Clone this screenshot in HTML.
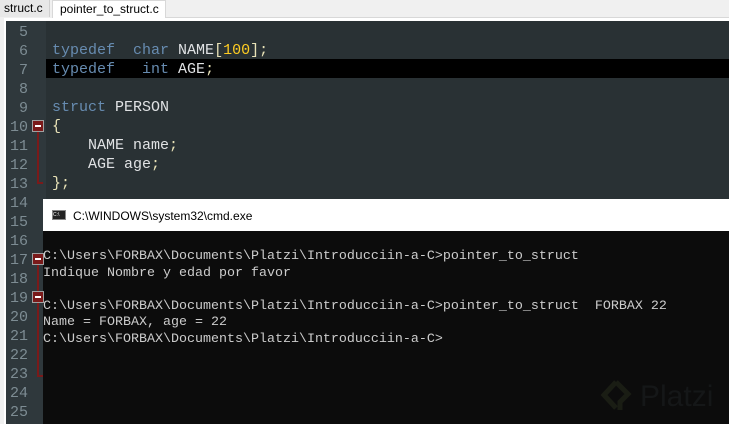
<!DOCTYPE html><html><head><style>
body{margin:0;width:729px;height:424px;overflow:hidden;background:#f0f0f0;position:relative;font-family:"Liberation Sans",sans-serif}
.a{position:absolute}
.mono{font-family:"Liberation Mono",monospace}
.ln{position:absolute;left:6px;width:22px;text-align:right;color:#7d8c93;font-size:15px;font-family:"Liberation Mono",monospace;line-height:19px}
.code{position:absolute;left:52px;font-size:15px;line-height:19px;color:#e0e2e4;white-space:pre}
.k{color:#678cb1}.n{color:#ffcd22}.p{color:#e8e2b7}
.fb{position:absolute;left:32px;width:10px;height:10px;border:1px solid #a0a0a0;background:#7a1a1a}
.fb:after{content:"";position:absolute;left:2px;top:4px;width:6px;height:2px;background:#fff}
.cmd{position:absolute;left:43px;font-size:13.33px;line-height:16.6px;color:#cccccc;white-space:pre;font-family:"Liberation Mono",monospace}
</style></head><body>
<div class="a" style="left:0;top:0;width:50px;height:17px;background:#e8e8e8;border-right:1px solid #d0d0d0;font-size:12px;line-height:17px;padding-left:4px;box-sizing:border-box">struct.c</div>
<div class="a" style="left:52px;top:0;width:114px;height:19px;background:#fff;border:1px solid #d8d8d8;border-bottom:none;font-size:12px;line-height:17px;padding-left:7px;box-sizing:border-box">pointer_to_struct.c</div>
<div class="a" style="left:166px;top:17px;width:563px;height:1px;background:#d8d8d8"></div>
<div class="a" style="left:4px;top:18px;width:725px;height:406px;background:#fff"></div>
<div class="a" style="left:6px;top:21px;width:40px;height:403px;background:#2f383c"></div>
<div class="a" style="left:46px;top:21px;width:683px;height:403px;background:#293134"></div>
<div class="a" style="left:46px;top:59px;width:683px;height:19px;background:#000"></div>
<div class="ln" style="top:23px">5<br>6<br>7<br>8<br>9<br>10<br>11<br>12<br>13<br>14<br>15<br>16<br>17<br>18<br>19<br>20<br>21<br>22<br>23<br>24<br>25</div>
<div class="code mono" style="top:41px"><span class="k">typedef</span>  <span class="k">char</span> NAME<span class="p">[</span><span class="n">100</span><span class="p">];</span>
<span class="k">typedef</span>   <span class="k">int</span> AGE<span class="p">;</span>

<span class="k">struct</span> PERSON
<span class="p">{</span>
    NAME name<span class="p">;</span>
    AGE age<span class="p">;</span>
<span class="p">};</span></div>
<div class="a" style="left:37px;top:131px;width:2px;height:52px;background:#7a1a1a"></div>
<div class="a" style="left:37px;top:182px;width:6px;height:2px;background:#7a1a1a"></div>
<div class="fb" style="top:120px"></div>
<div class="a" style="left:43px;top:199px;width:686px;height:32px;background:#fff"></div>
<div class="a" style="left:52px;top:210px;width:14px;height:10px;background:#222;border:1px solid #888;box-sizing:border-box;font-size:5px;color:#fff;line-height:8px">C:\</div>
<div class="a" style="left:73px;top:209px;font-size:12px;color:#000">C:\WINDOWS\system32\cmd.exe</div>
<div class="a" style="left:43px;top:231px;width:686px;height:193px;background:#0c0c0c"></div>
<div class="cmd" style="top:249px">C:\Users\FORBAX\Documents\Platzi\Introducciin-a-C&gt;pointer_to_struct
Indique Nombre y edad por favor

C:\Users\FORBAX\Documents\Platzi\Introducciin-a-C&gt;pointer_to_struct  FORBAX 22
Name = FORBAX, age = 22
C:\Users\FORBAX\Documents\Platzi\Introducciin-a-C&gt;</div>
<div class="a" style="left:37px;top:264px;width:2px;height:112px;background:#7a1a1a"></div>
<div class="a" style="left:37px;top:375px;width:6px;height:2px;background:#7a1a1a"></div>
<div class="fb" style="top:253px"></div>
<div class="fb" style="top:291px"></div>
<svg class="a" style="left:598px;top:378px" width="40" height="36" viewBox="0 0 40 36"><path d="M18 4 L6 17 L18 30 M18 4 L30 16 L22 24 L22 32" fill="none" stroke="#1a1d14" stroke-width="5"/></svg>
<div class="a" style="left:640px;top:380px;font-size:30px;color:#151718">Platzi</div>
</body></html>
